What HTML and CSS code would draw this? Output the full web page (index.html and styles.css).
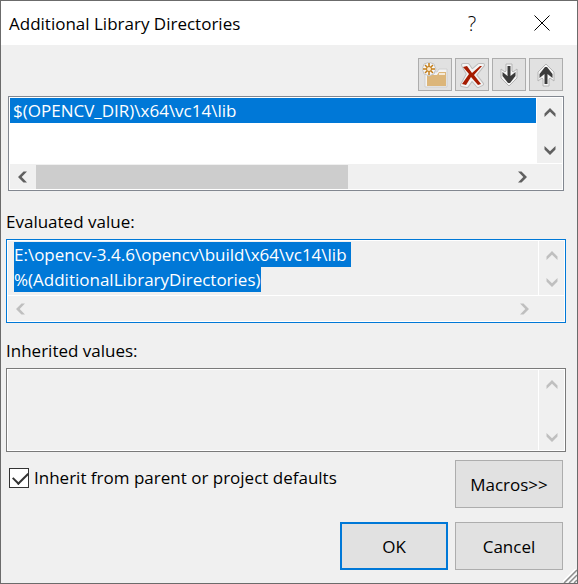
FILE: index.html
```html
<!DOCTYPE html>
<html lang="en">
<head>
<meta charset="utf-8">
<title>Additional Library Directories</title>
<link rel="stylesheet" href="styles.css">
</head>
<body>
<svg class="defs" aria-hidden="true">
  <defs>
    <symbol id="chevron-up" viewBox="0 0 12 9"><path d="M0.5 5.5L6 0l5.500 5.500v3.500L6 3.700 0.500 9z"/></symbol>
    <symbol id="chevron-down" viewBox="0 0 12 9"><path d="M0.500 0L6 5.300 11.500 0v3.500L6 9 0.500 3.500z"/></symbol>
    <symbol id="chevron-left" viewBox="0 0 9 12"><path d="M5.500 0.500H9L3.700 6 9 11.500H5.500L0 6z"/></symbol>
    <symbol id="chevron-right" viewBox="0 0 9 12"><path d="M0 0.500h3.500L9 6l-5.500 5.500H0L5.300 6z"/></symbol>
  </defs>
</svg>
<main class="dialog">
  <header class="titlebar">
    <h1>Additional Library Directories</h1>
    <button class="caption help" aria-label="Help">?</button>
    <button class="caption close" aria-label="Close">
      <svg width="16" height="16" viewBox="0 0 16 16"><path d="M0.500 0.500l15 15M15.500 0.500l-15 15" stroke="#000" fill="none"/></svg>
    </button>
  </header>

  <div class="body">
    <div class="toolbar">
      <button class="tool" aria-label="New line">
        <svg width="26" height="26" viewBox="0 0 26 26">
          <path d="M3 10h12l2-3h8v18H3z" fill="#f4f4f4" stroke="#cfcfcf"/>
          <path d="M5 13h10l2-3h7v14H5z" fill="#dcb67a"/>
          <path d="M17 11h6v2h-6z" fill="#f5ead8"/>
          <path d="M7 0l2 1 3 1 1 3 1 2-1 2-1 3-3 1-2 1-2-1-3-1-1-3-1-2 1-2 1-3 3-1z" fill="#f6f6f6" stroke="#c4c4c4"/>
          <path d="M7 1v12M1 7h12M3 3l8 8M11 3l-8 8" stroke="#c27d1a" stroke-width="1.500"/>
          <circle cx="7" cy="7" r="2.500" fill="#fbe9cc" stroke="#c27d1a"/>
        </svg>
      </button>
      <button class="tool" aria-label="Delete">
        <svg width="26" height="26" viewBox="0 0 26 26" fill="none" stroke-linejoin="round">
          <path d="M4 3h5l4 6 7-6h4l-8 10 7 9-4 2-6-7-5 7-5-1 6-11z" stroke="#bdbdbd" stroke-width="4"/>
          <path d="M4 3h5l4 6 7-6h4l-8 10 7 9-4 2-6-7-5 7-5-1 6-11z" fill="#f4f4f4" stroke="#f4f4f4" stroke-width="2"/>
          <path d="M4 5l4-1 5 7 8-7h2l-8 9 7 9-3 1-7-8-5 8-4-1 7-10z" fill="#a61b00"/>
        </svg>
      </button>
      <button class="tool" aria-label="Move down">
        <svg width="26" height="26" viewBox="0 0 26 26">
          <path d="M10 2h6v7l1 1 4-3v9l-8 8-8-8V7l4 3 1-1z" fill="#f6f6f6" stroke="#b5b5b5"/>
          <path d="M11.500 4h3v10l5-4v4L14 21h-2l-5.500-7v-4l5 4z" fill="#3c3c3c"/>
        </svg>
      </button>
      <button class="tool" aria-label="Move up">
        <svg width="26" height="26" viewBox="0 0 26 26">
          <path d="M10 24h6v-7l1-1 4 3v-9l-8-8-8 8v9l4-3 1 1z" fill="#f6f6f6" stroke="#b5b5b5"/>
          <path d="M11.500 22h3V12l5 4v-4L14 5h-2l-5.500 7v4l5-4z" fill="#3c3c3c"/>
        </svg>
      </button>
    </div>

    <div class="field list">
      <ul class="content" role="listbox" aria-label="Additional library directories">
        <li role="option" aria-selected="true">$(OPENCV_DIR)\x64\vc14\lib</li>
      </ul>
      <div class="vbar">
        <svg width="12" height="9"><use href="#chevron-up"/></svg>
        <svg width="12" height="9"><use href="#chevron-down"/></svg>
      </div>
      <div class="hbar">
        <svg width="9" height="12"><use href="#chevron-left"/></svg>
        <div class="track"><div class="thumb"></div></div>
        <svg width="9" height="12"><use href="#chevron-right"/></svg>
      </div>
    </div>

    <label class="caption-text" for="evaluated">Evaluated value:</label>
    <div class="field readonly focused">
      <textarea class="content" id="evaluated" readonly wrap="off">E:\opencv-3.4.6\opencv\build\x64\vc14\lib
%(AdditionalLibraryDirectories)</textarea>
      <div class="vbar">
        <svg width="12" height="9"><use href="#chevron-up"/></svg>
        <svg width="12" height="9"><use href="#chevron-down"/></svg>
      </div>
      <div class="hbar">
        <svg width="9" height="12"><use href="#chevron-left"/></svg>
        <div class="track"></div>
        <svg width="9" height="12"><use href="#chevron-right"/></svg>
      </div>
    </div>

    <label class="caption-text" for="inherited">Inherited values:</label>
    <div class="field readonly tall">
      <textarea class="content" id="inherited" readonly></textarea>
      <div class="vbar">
        <svg width="12" height="9"><use href="#chevron-up"/></svg>
        <svg width="12" height="9"><use href="#chevron-down"/></svg>
      </div>
    </div>

    <div class="options">
      <label class="check"><input type="checkbox" checked><span>Inherit from parent or project defaults</span></label>
      <button class="push">Macros&gt;&gt;</button>
    </div>
    <div class="actions">
      <button class="push default">OK</button>
      <button class="push">Cancel</button>
    </div>
  </div>
  <svg class="grip" width="14" height="14" viewBox="0 0 14 14" aria-hidden="true">
    <path d="M0 13L13 0M5 14L14 5M10 14l4-4" stroke="#fff" stroke-width="2"/>
    <path d="M1 14L14 1M6 14l8-8M11 14l3-3" stroke="#8c8c8c" stroke-width="1.500"/>
  </svg>
</main>
<script src="script.js"></script>
</body>
</html>
```

FILE: styles.css
```css
* { box-sizing: border-box; }

body {
  margin: 0;
  background: #f0f0f0;
  color: #000;
  font: 17px/25px "Open Sans", "Noto Sans", sans-serif;
}

button, textarea { font: inherit; color: inherit; }

.defs { position: absolute; width: 0; height: 0; }

.dialog {
  position: relative;
  min-height: 100vh;
  border: 1px solid #6b6b6b;
  background: #f0f0f0;
}

.titlebar {
  display: flex;
  align-items: center;
  height: 44px;
  padding-left: 8px;
  background: #fff;
}

.titlebar h1 {
  flex: 1;
  margin: 0;
  font-size: 17px;
  font-weight: 400;
}

.caption {
  display: flex;
  align-items: center;
  justify-content: center;
  width: 70px;
  height: 44px;
  padding: 0;
  border: 0;
  background: none;
}

.help {
  font-size: 20px;
  font-weight: 300;
}

.body { padding: 13px 11px 13px 5px; }

.toolbar {
  display: flex;
  justify-content: flex-end;
  gap: 3px;
  margin: 0 3px 5px 0;
}

.tool {
  display: flex;
  align-items: center;
  justify-content: center;
  width: 34px;
  height: 33px;
  padding: 0;
  border: 1px solid #adadad;
  background: #e1e1e1;
}

.field {
  display: grid;
  grid-template-columns: 1fr 25px;
  grid-template-rows: 1fr 25px;
  gap: 1px;
  border: 1px solid #7a7a7a;
  padding: 1px;
  background: #fff;
}

.list {
  height: 95px;
  margin: 0 2px;
  border-color: #828790;
}

.readonly { height: 84px; }
.focused { border-color: #0078d7; }
.tall { grid-template-rows: 1fr; }

.content {
  width: 100%;
  height: 100%;
  margin: 0;
  border: 0;
  padding: 0;
  outline: 0;
  resize: none;
  overflow: hidden;
  list-style: none;
}

.content li {
  padding-left: 3px;
  background: #0078d7;
  color: #fff;
}

textarea.content {
  padding: 1px 6px 0;
  background: #f0f0f0;
}

textarea::selection { background: #0078d7; color: #fff; }

.vbar {
  display: flex;
  flex-direction: column;
  align-items: center;
  justify-content: space-between;
  padding: 10px 0 8px;
  background: #f0f0f0;
  fill: #606060;
}

.hbar {
  grid-column: 1 / -1;
  display: flex;
  align-items: center;
  gap: 9px;
  padding: 0 35px 0 8px;
  background: #f0f0f0;
  fill: #606060;
}

.readonly .vbar, .readonly .hbar { fill: #bfbfbf; }

.track { flex: 1; height: 24px; }
.thumb { width: 66%; height: 100%; background: #cdcdcd; }

.caption-text {
  display: block;
  height: 25px;
  margin: 18px 0 5px;
}

.focused + .caption-text { margin: 15px 0 5px; }

.options {
  display: flex;
  justify-content: space-between;
  align-items: flex-start;
  margin: 8px 3px 14px;
}

.check {
  display: flex;
  align-items: center;
  gap: 5px;
  margin-top: 5px;
}

.check input {
  appearance: none;
  width: 20px;
  height: 20px;
  margin: 0;
  border: 1px solid #333;
  background: #fff;
}

.check input:checked::before {
  content: "";
  display: block;
  width: 13px;
  height: 7px;
  margin: 3px;
  border: solid #333;
  border-width: 0 0 2px 2px;
  transform: rotate(-45deg);
}

.push {
  width: 108px;
  height: 48px;
  border: 1px solid #adadad;
  padding: 0;
  background: #e1e1e1;
}

.default { border: 2px solid #0078d7; }

.actions {
  display: flex;
  justify-content: flex-end;
  gap: 7px;
  margin-right: 3px;
}

.grip {
  position: absolute;
  right: 0;
  bottom: 0;
}
```

FILE: script.js
```js
const evaluated = document.getElementById("evaluated");
evaluated.focus({ preventScroll: true });
evaluated.select();
```
